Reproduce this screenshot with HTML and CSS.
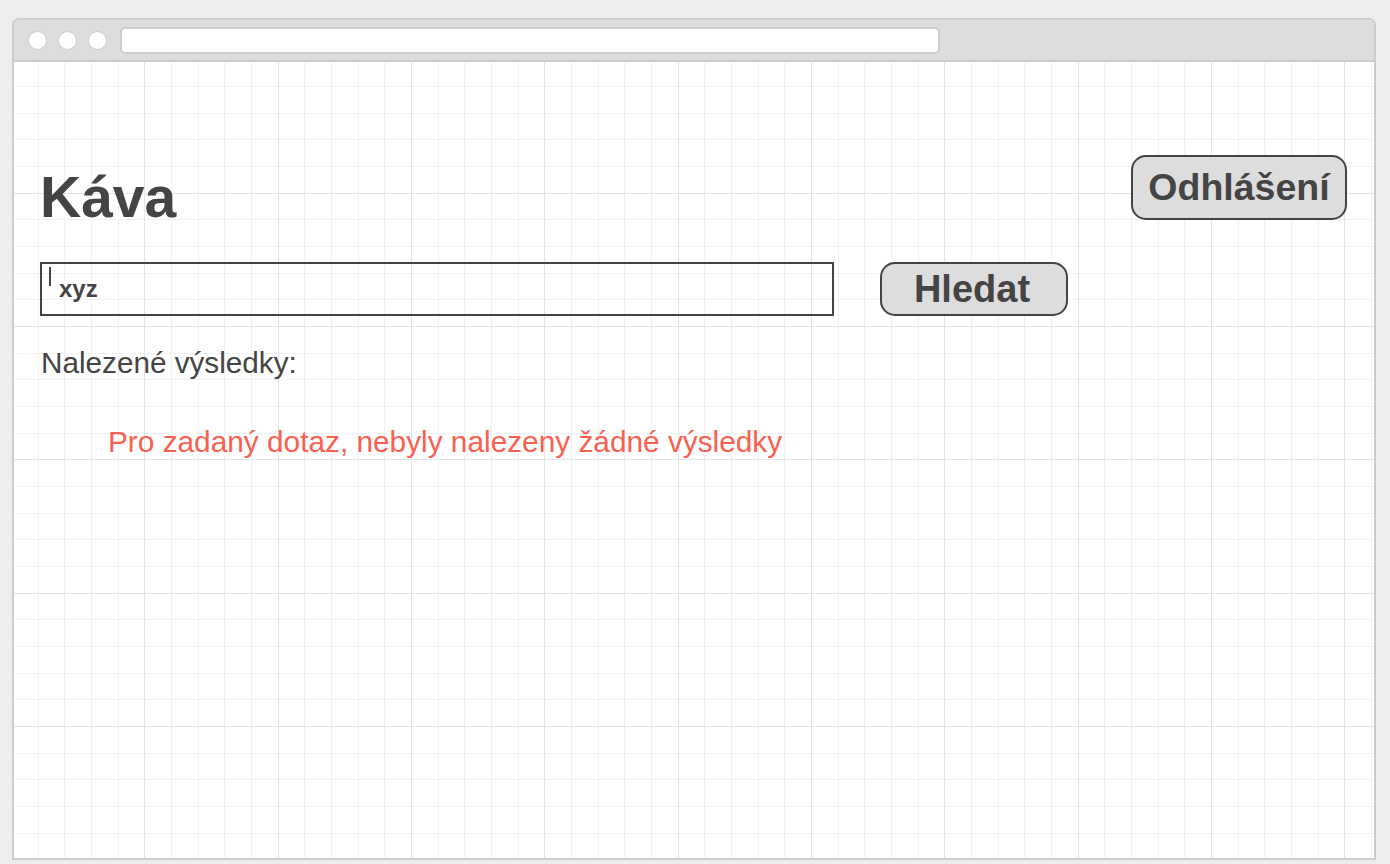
FILE: index.html
```html
<!DOCTYPE html>
<html lang="cs">
<head>
<meta charset="utf-8">
<title>Káva</title>
<link rel="stylesheet" href="styles.css">
</head>
<body>
<div class="window">
  <div class="titlebar">
    <span class="dot"></span>
    <span class="dot"></span>
    <span class="dot"></span>
    <div class="address"></div>
  </div>
  <div class="content">
    <div class="header">
      <h1 class="title">Káva</h1>
      <button class="btn btn-logout">Odhlášení</button>
    </div>
    <div class="search-row">
      <div class="search-input">
        <span class="caret"></span>
        <span class="query">xyz</span>
      </div>
      <button class="btn btn-search">Hledat</button>
    </div>
    <p class="results-label">Nalezené výsledky:</p>
    <p class="no-results">Pro zadaný dotaz, nebyly nalezeny žádné výsledky</p>
  </div>
</div>
</body>
</html>
```

FILE: styles.css
```css
html, body {
  margin: 0;
  padding: 0;
  background: #eeeeee;
  font-family: "Liberation Sans", Arial, sans-serif;
  color: #444444;
}

.window {
  box-sizing: border-box;
  margin: 18px 0 0 12px;
  width: 1364px;
  height: 842px;
  border: 2px solid #cccccc;
  border-radius: 7px 7px 0 0;
  display: flex;
  flex-direction: column;
  overflow: hidden;
  background: #ffffff;
}

.titlebar {
  height: 40px;
  flex: none;
  background: #dddddd;
  border-bottom: 2px solid #cccccc;
  display: flex;
  align-items: center;
  padding-left: 14px;
  gap: 11px;
}

.dot {
  box-sizing: border-box;
  width: 19px;
  height: 19px;
  border-radius: 50%;
  background: #ffffff;
  border: 1.5px solid #cccccc;
  flex: none;
}

.address {
  box-sizing: border-box;
  margin-left: 2px;
  width: 820px;
  height: 27px;
  background: #ffffff;
  border: 2px solid #cccccc;
  border-radius: 5px;
}

.content {
  flex: 1;
  padding: 93px 27px 0 26px;
  background-color: #ffffff;
  background-image:
    repeating-linear-gradient(to right, transparent 0 130.333px, #e4e4e4 130.333px 131.5px, transparent 131.5px 133.333px),
    repeating-linear-gradient(to bottom, transparent 0 130.63px, #e4e4e4 130.63px 131.8px, transparent 131.8px 133.333px),
    repeating-linear-gradient(to right, transparent 0 23.667px, #f1f1f1 23.667px 24.8px, transparent 24.8px 26.6667px),
    repeating-linear-gradient(to bottom, transparent 0 23.97px, #f1f1f1 23.97px 25.1px, transparent 25.1px 26.6667px);
}

.header {
  display: flex;
  justify-content: space-between;
  align-items: flex-start;
}

.title {
  margin: 14px 0 0 0;
  font-size: 57px;
  line-height: 57px;
  font-weight: bold;
  color: #444444;
}

.btn {
  box-sizing: border-box;
  font-family: "Liberation Sans", Arial, sans-serif;
  font-weight: bold;
  color: #444444;
  background: #dddddd;
  border: 2px solid #444444;
  border-radius: 15px;
  padding: 0;
  text-align: center;
  cursor: pointer;
}

.btn-logout {
  width: 216px;
  height: 65px;
  font-size: 37.5px;
  line-height: 61px;
}

.search-row {
  margin-top: 36px;
  display: flex;
  align-items: flex-start;
  gap: 46px;
}

.search-input {
  box-sizing: border-box;
  width: 794px;
  height: 54px;
  border: 2px solid #444444;
  position: relative;
  padding: 9px 0 0 17px;
}

.caret {
  position: absolute;
  left: 7px;
  top: 3px;
  width: 1.5px;
  height: 19px;
  background: #444444;
}

.query {
  font-size: 24px;
  font-weight: bold;
  line-height: 32px;
  color: #444444;
}

.btn-search {
  width: 188px;
  height: 54px;
  font-size: 38px;
  line-height: 50px;
  padding-right: 4px;
}

.results-label {
  margin: 30px 0 0 1px;
  font-size: 29.7px;
  line-height: 34px;
  color: #444444;
}

.no-results {
  margin: 45px 0 0 68px;
  font-size: 29.8px;
  line-height: 34px;
  color: #fa604f;
}
```
